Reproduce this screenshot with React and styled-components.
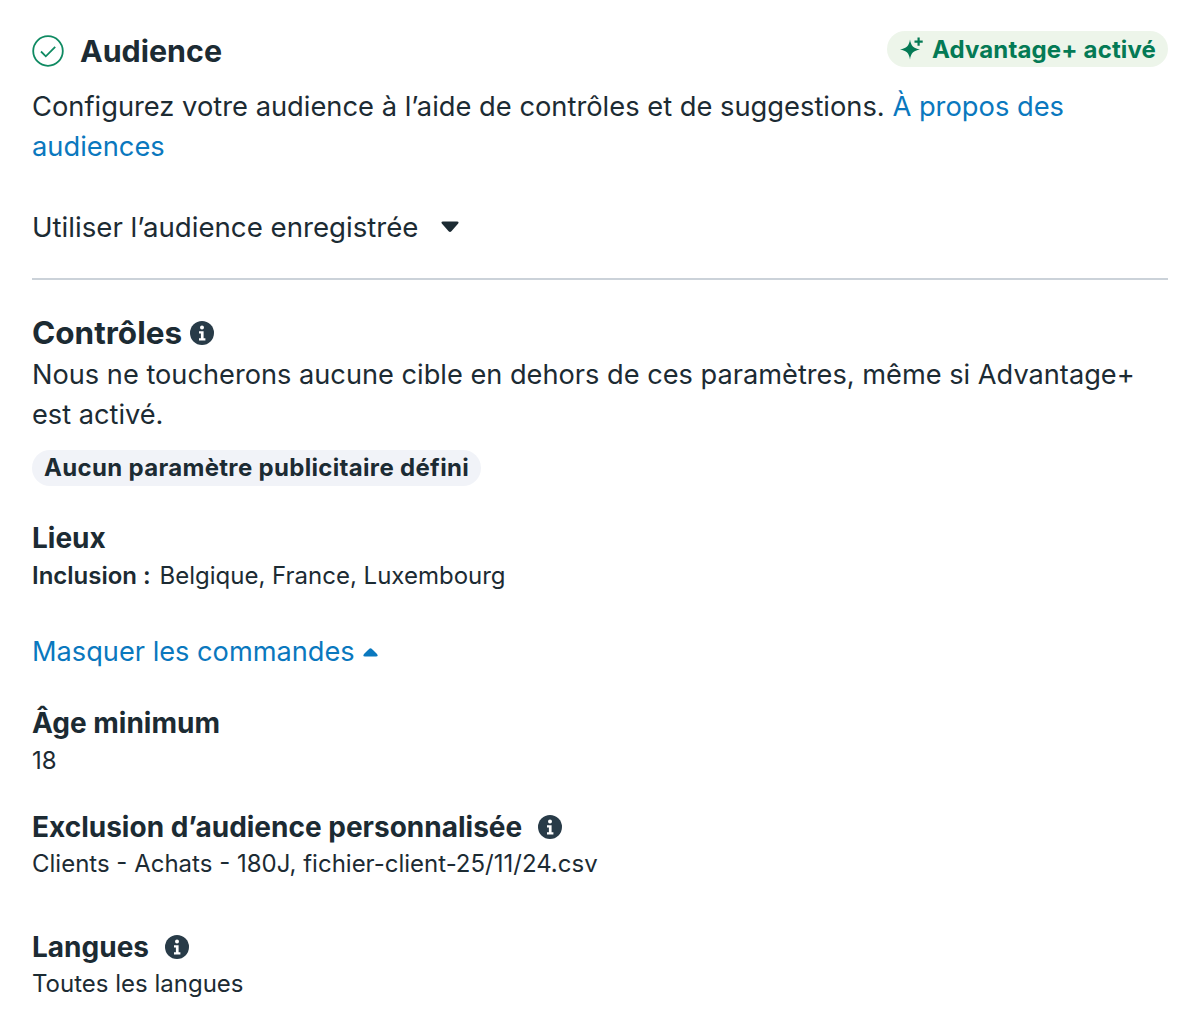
import styled, { createGlobalStyle } from 'styled-components';

const GlobalStyle = createGlobalStyle`
  html, body {
    margin: 0;
    background: #ffffff;
  }
  body {
    font-family: Inter, "Liberation Sans", sans-serif;
    color: #1c2b33;
  }
`;

function InfoIcon() {
  return (
    <svg width="24" height="24" viewBox="0 0 24 24" aria-hidden="true">
      <circle cx="12" cy="12" r="12" fill="#283b48" />
      <circle cx="12" cy="6.6" r="2" fill="#fff" />
      <path d="M9 10.2h4.6v7.1H15.4v2.2H9v-2.2h1.9v-4.900H9z" fill="#fff" />
    </svg>
  );
}

function CaretDown() {
  return (
    <svg width="18" height="12" viewBox="0 0 18 12" aria-hidden="true">
      <path d="M2 .5h14Q18.500.5 17 2.800L10.400 10.300Q9 11.700 7.600 10.300L1 2.800Q-.5.5 2 .5Z" fill="currentColor" />
    </svg>
  );
}

function CaretUp() {
  return (
    <svg width="15" height="9" viewBox="0 0 15 9" aria-hidden="true">
      <path d="M6.300.8Q7.500-.2 8.700.8L14 6Q15.800 8.500 13 8.500H2Q-.8 8.500 1 6Z" fill="currentColor" />
    </svg>
  );
}

function App() {
  return (
    <Page>
      <GlobalStyle />
      <Header>
        <TitleGroup>
          <svg width="32" height="32" viewBox="0 0 32 32" aria-hidden="true">
            <circle cx="16" cy="16" r="14.8" fill="none" stroke="#0f8a62" strokeWidth="1.8" />
            <path d="M9 16.500l4.800 4.800 9.400-9.400" fill="none" stroke="#0f8a62" strokeWidth="1.8" />
          </svg>
          <Title>Audience</Title>
        </TitleGroup>
        <AdvantageBadge>
          <svg width="24" height="24" viewBox="0 0 24 24" aria-hidden="true">
            <path d="M11 2.500c1 6.300 3.400 8.900 10 10-6.600 1.100-9 3.700-10 10-1-6.300-3.400-8.900-10-10 6.600-1.100 9-3.700 10-10Z" fill="#047a55" />
            <path d="M18.500 .5h2.200v3h3v2.200h-3v3h-2.200v-3h-3V3.500h3z" fill="#047a55" />
          </svg>
          Advantage+ activé
        </AdvantageBadge>
      </Header>

      <Intro $size={27.3}>
        Configurez votre audience à l’aide de contrôles et de suggestions. <TextLink>À propos des audiences</TextLink>
      </Intro>

      <SavedAudience>
        Utiliser l’audience enregistrée
        <CaretDown />
      </SavedAudience>

      <Divider />

      <Section>
        <SectionTitle>
          Contrôles
          <InfoIcon />
        </SectionTitle>
        <Intro>Nous ne toucherons aucune cible en dehors de ces paramètres, même si Advantage+ est activé.</Intro>
        <NeutralBadge>Aucun paramètre publicitaire défini</NeutralBadge>
      </Section>

      <Field $top={34}>
        <FieldLabel>Lieux</FieldLabel>
        <FieldValue $top={2}>
          <strong>Inclusion :</strong> Belgique, France, Luxembourg
        </FieldValue>
      </Field>

      <ToggleLink>
        Masquer les commandes
        <CaretUp />
      </ToggleLink>

      <Field $top={33}>
        <FieldLabel>Âge minimum</FieldLabel>
        <FieldValue $top={2}>18</FieldValue>
      </Field>

      <Field $top={30}>
        <FieldLabel $gap={16}>
          Exclusion d’audience personnalisée
          <InfoIcon />
        </FieldLabel>
        <FieldValue>Clients - Achats - 180J, fichier-client-25/11/24.csv</FieldValue>
      </Field>

      <Field $top={47}>
        <FieldLabel $gap={16}>
          Langues
          <InfoIcon />
        </FieldLabel>
        <FieldValue>Toutes les langues</FieldValue>
      </Field>
    </Page>
  );
}

const Page = styled.div`
  box-sizing: border-box;
  width: 1198px;
  height: 1024px;
  padding: 31px 30px 0 32px;
  overflow: hidden;
`;

const Header = styled.div`
  display: flex;
  justify-content: space-between;
  align-items: center;
  height: 40px;
`;

const TitleGroup = styled.div`
  display: flex;
  align-items: center;
  gap: 16px;
`;

const Title = styled.h2`
  margin: 0;
  font-size: 30.4px;
  font-weight: 700;
  line-height: 40px;
`;

const AdvantageBadge = styled.div`
  display: flex;
  align-items: center;
  gap: 9px;
  height: 36px;
  margin-top: -4px;
  padding: 0 12px;
  border-radius: 18px;
  background: #edf5ea;
  color: #047a55;
  font-size: 24px;
  font-weight: 700;
  letter-spacing: 0.14px;
`;

const Intro = styled.p`
  margin: 16px 0 0;
  font-size: ${(props) => props.$size || 27.2}px;
  line-height: 40px;
`;

const TextLink = styled.a`
  color: #0a78be;
`;

const SavedAudience = styled.div`
  display: flex;
  align-items: center;
  gap: 23px;
  margin-top: 40px;
  font-size: 27.65px;
  line-height: 40px;
`;

const Divider = styled.hr`
  margin: 31px 0 0;
  border: 0;
  border-top: 2px solid #cbd2d9;
`;

const Section = styled.section`
  margin-top: 33px;
  ${Intro} {
    margin-top: 2px;
  }
`;

const SectionTitle = styled.h3`
  display: flex;
  align-items: center;
  gap: 8px;
  margin: 0;
  font-size: 31.5px;
  font-weight: 700;
  line-height: 40px;
`;

const NeutralBadge = styled.div`
  display: inline-block;
  margin-top: 15px;
  padding: 0 12px;
  border-radius: 18px;
  background: #f1f3f8;
  font-size: 24px;
  font-weight: 700;
  letter-spacing: 0.32px;
  line-height: 36px;
`;

const Field = styled.div`
  margin-top: ${(props) => props.$top}px;
`;

const FieldLabel = styled.div`
  display: flex;
  align-items: center;
  gap: ${(props) => props.$gap || 8}px;
  font-size: 28px;
  font-weight: 700;
  line-height: 36px;
`;

const FieldValue = styled.div`
  margin-top: ${(props) => props.$top || 1}px;
  font-size: 24px;
  line-height: 36px;
  strong {
    margin-right: 2px;
    font-weight: 600;
  }
`;

const ToggleLink = styled.a`
  display: flex;
  align-items: center;
  gap: 8px;
  margin-top: 38px;
  color: #0a78be;
  font-size: 27.2px;
  line-height: 40px;
`;

export default App;
